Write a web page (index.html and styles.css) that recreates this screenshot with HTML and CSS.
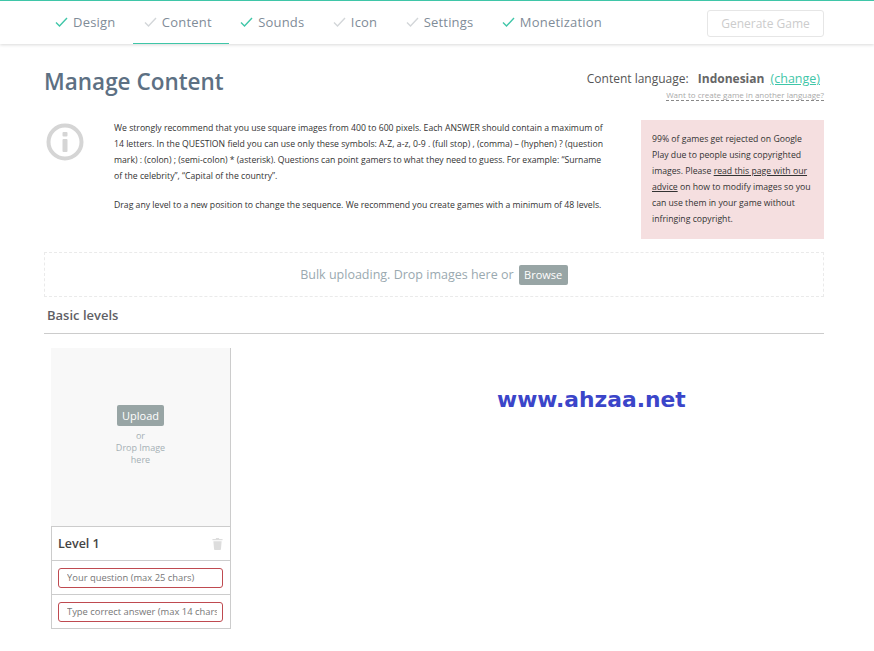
FILE: index.html
```html
<!DOCTYPE html>
<html lang="en">
<head>
    <meta charset="UTF-8">
    <title>Manage Content</title>
    <link rel="stylesheet" href="styles.css">
</head>
<body>
    <header class="topbar">
        <nav class="steps">
            <a class="step done"><svg class="check" viewBox="0 0 13 10"><path d="M1 5.5 4.5 9 12 1"/></svg>Design</a>
            <a class="step active"><svg class="check" viewBox="0 0 13 10"><path d="M1 5.5 4.5 9 12 1"/></svg>Content</a>
            <a class="step done"><svg class="check" viewBox="0 0 13 10"><path d="M1 5.5 4.5 9 12 1"/></svg>Sounds</a>
            <a class="step"><svg class="check" viewBox="0 0 13 10"><path d="M1 5.5 4.5 9 12 1"/></svg>Icon</a>
            <a class="step"><svg class="check" viewBox="0 0 13 10"><path d="M1 5.5 4.5 9 12 1"/></svg>Settings</a>
            <a class="step done"><svg class="check" viewBox="0 0 13 10"><path d="M1 5.5 4.5 9 12 1"/></svg>Monetization</a>
        </nav>
        <button class="generate" type="button">Generate Game</button>
    </header>

    <main class="page">
        <div class="title-row">
            <h1>Manage Content</h1>
            <div class="language">
                <div class="language-line">Content language: <b>Indonesian</b> <a href="#">(change)</a></div>
                <a class="language-other" href="#">Want to create game in another language?</a>
            </div>
        </div>

        <section class="intro">
            <svg class="info-icon" viewBox="0 0 38 38">
                <circle cx="19" cy="19" r="16.5"/>
                <rect x="16.5" y="9" width="5" height="4.5" rx="1"/>
                <rect x="16.5" y="16" width="5" height="13" rx="1"/>
            </svg>
            <div class="intro-text">
                <p>We strongly recommend that you use square images from 400 to 600 pixels. Each ANSWER should contain a maximum of 14 letters. In the QUESTION field you can use only these symbols: A-Z, a-z, 0-9 . (full stop) , (comma) – (hyphen) ? (question mark) : (colon) ; (semi-colon) * (asterisk). Questions can point gamers to what they need to guess. For example: “Surname of the celebrity”, “Capital of the country”.</p>
                <p>Drag any level to a new position to change the sequence. We recommend you create games with a minimum of 48 levels.</p>
            </div>
            <aside class="warning">99% of games get rejected on Google Play due to people using copyrighted images. Please <a href="#">read this page with our advice</a> on how to modify images so you can use them in your game without infringing copyright.</aside>
        </section>

        <div class="dropzone">Bulk uploading. Drop images here or <button class="browse" type="button">Browse</button></div>

        <h2>Basic levels</h2>

        <div class="levels">
            <article class="level">
                <div class="level-image">
                    <button class="upload" type="button">Upload</button>
                    <div class="drop-note">or<br>Drop Image<br>here</div>
                </div>
                <div class="level-name">
                    <span>Level 1</span>
                    <svg class="trash" viewBox="0 0 12 14">
                        <path d="M4.5 1h3l.5 1h3.500v1.500H.5V2H4z"/>
                        <path d="M1.500 4.500h9l-.7 8.500a1 1 0 0 1-1 1H3.200a1 1 0 0 1-1-1z"/>
                    </svg>
                </div>
                <div class="level-field"><input type="text" placeholder="Your question (max 25 chars)"></div>
                <div class="level-field"><input type="text" placeholder="Type correct answer (max 14 chars)"></div>
            </article>
        </div>
    </main>

    <div class="watermark">www.ahzaa.net</div>
</body>
</html>
```

FILE: styles.css
```css
body {
    margin: 0;
    font-family: "Open Sans", Arial, sans-serif;
    background-color: #fff;
    color: #333;
}

.topbar {
    display: flex;
    justify-content: space-between;
    height: 43px;
    padding: 0 50px 0 44px;
    border-top: 1px solid #3fc6a8;
    box-shadow: 0 1px 3px rgba(0, 0, 0, 0.15);
}

.steps {
    display: flex;
}

.step {
    display: flex;
    align-items: center;
    box-sizing: border-box;
    height: 43px;
    padding: 0 17.400px 1px 11px;
    font-size: 13px;
    letter-spacing: 0.2px;
    color: #7f8c98;
    border-bottom: 1px solid transparent;
}

.step.active {
    border-bottom-color: #3fc6a8;
}

.check {
    width: 13px;
    height: 10px;
    margin-right: 5px;
    fill: none;
    stroke: #d3d6d9;
    stroke-width: 1.4;
}

.done .check {
    stroke: #3fc6a8;
}

.generate {
    width: 117px;
    height: 27px;
    margin-top: 9px;
    padding: 0 0 1px;
    font-family: inherit;
    font-size: 12px;
    color: #ccc;
    background: #fff;
    border: 1px solid #e6e6e6;
    border-radius: 3px;
}

.page {
    padding: 0 50px 0 44px;
}

.title-row {
    display: flex;
    justify-content: space-between;
    height: 76px;
}

h1 {
    margin: 20px 0 0;
    font-size: 22.500px;
    line-height: 36px;
    font-weight: 600;
    color: #5d7083;
}

.language {
    display: flex;
    flex-direction: column;
    align-items: flex-end;
    margin-top: 26px;
}

.language-line {
    margin-right: 4px;
    font-size: 12px;
    line-height: 18px;
    color: #555;
}

.language-line b {
    margin: 0 3px 0 6px;
    color: #666;
}

.language-line a {
    font-size: 12.500px;
    color: #3fc6a8;
}

.language-other {
    margin-top: 2px;
    font-size: 8px;
    line-height: 10px;
    color: #aaa;
    text-decoration: none;
    border-bottom: 1px dashed #888;
}

.intro {
    display: flex;
}

.info-icon {
    flex: none;
    width: 38px;
    height: 38px;
    margin: 3px 30px 0 2px;
    fill: #d5d5d5;
}

.info-icon circle {
    fill: none;
    stroke: #d5d5d5;
    stroke-width: 4;
}

.intro-text {
    width: 490px;
    margin-right: 37px;
    font-size: 8.680px;
    line-height: 16px;
    color: #333;
}

.intro-text p {
    margin: 0 0 13px;
}

.warning {
    box-sizing: border-box;
    width: 183px;
    height: 119px;
    padding: 11px;
    font-size: 8.680px;
    line-height: 16px;
    color: #333;
    background-color: #f5dfe0;
}

.warning a {
    color: #333;
}

.dropzone {
    display: flex;
    align-items: center;
    justify-content: center;
    gap: 5px;
    height: 43px;
    margin-top: 13px;
    font-size: 12.500px;
    color: #9aa9b0;
    border: 1px dashed #eaeaea;
}

.browse {
    height: 20px;
    padding: 0 5.500px;
    font-family: inherit;
    font-size: 11px;
    color: #fff;
    background-color: #98a5a5;
    border: none;
    border-radius: 2px;
}

h2 {
    margin: 0;
    padding: 8px 3px 8px;
    font-size: 13px;
    line-height: 20px;
    font-weight: 600;
    color: #5f5f66;
    border-bottom: 1px solid #ccc;
}

.levels {
    padding: 14px 0 0 7px;
}

.level {
    box-sizing: border-box;
    width: 180px;
    border-right: 1px solid #ccc;
    border-bottom: 1px solid #ccc;
}

.level-image {
    height: 178px;
    padding-top: 1px;
    box-sizing: border-box;
    text-align: center;
    background-color: #f8f8f8;
}

.upload {
    display: block;
    width: 47px;
    height: 21px;
    margin: 0 auto;
    position: relative;
    top: 56px;
    padding: 0;
    font-family: inherit;
    font-size: 11px;
    color: #fff;
    background-color: #98a5a5;
    border: none;
    border-radius: 2px;
}

.drop-note {
    margin-top: 60px;
    font-size: 9px;
    line-height: 12px;
    color: #a5b0b5;
}

.level-name {
    display: flex;
    align-items: center;
    justify-content: space-between;
    height: 33px;
    padding: 0 7px 0 6px;
    font-size: 12.500px;
    font-weight: 600;
    color: #444;
    border: 1px solid #ccc;
    border-right: none;
}

.trash {
    width: 11px;
    height: 13px;
    fill: #ddd;
}

.level-field {
    height: 34px;
    padding: 7px 7px 0 6px;
    box-sizing: border-box;
    border-left: 1px solid #ccc;
    border-bottom: 1px solid #ccc;
}

.level-field:last-child {
    height: 33px;
    border-bottom: none;
}

.level-field input {
    display: block;
    box-sizing: border-box;
    width: 165px;
    height: 20px;
    padding: 0 5px 2px 8px;
    font-family: inherit;
    font-size: 9.400px;
    background: #fff;
    border: 1px solid #bf4a50;
    border-radius: 3px;
}

.level-field input::placeholder {
    color: #777;
}

.watermark {
    position: absolute;
    left: 497px;
    top: 387px;
    font-family: "DejaVu Sans", sans-serif;
    font-size: 21.800px;
    font-weight: 700;
    color: #3b45c9;
}
```
